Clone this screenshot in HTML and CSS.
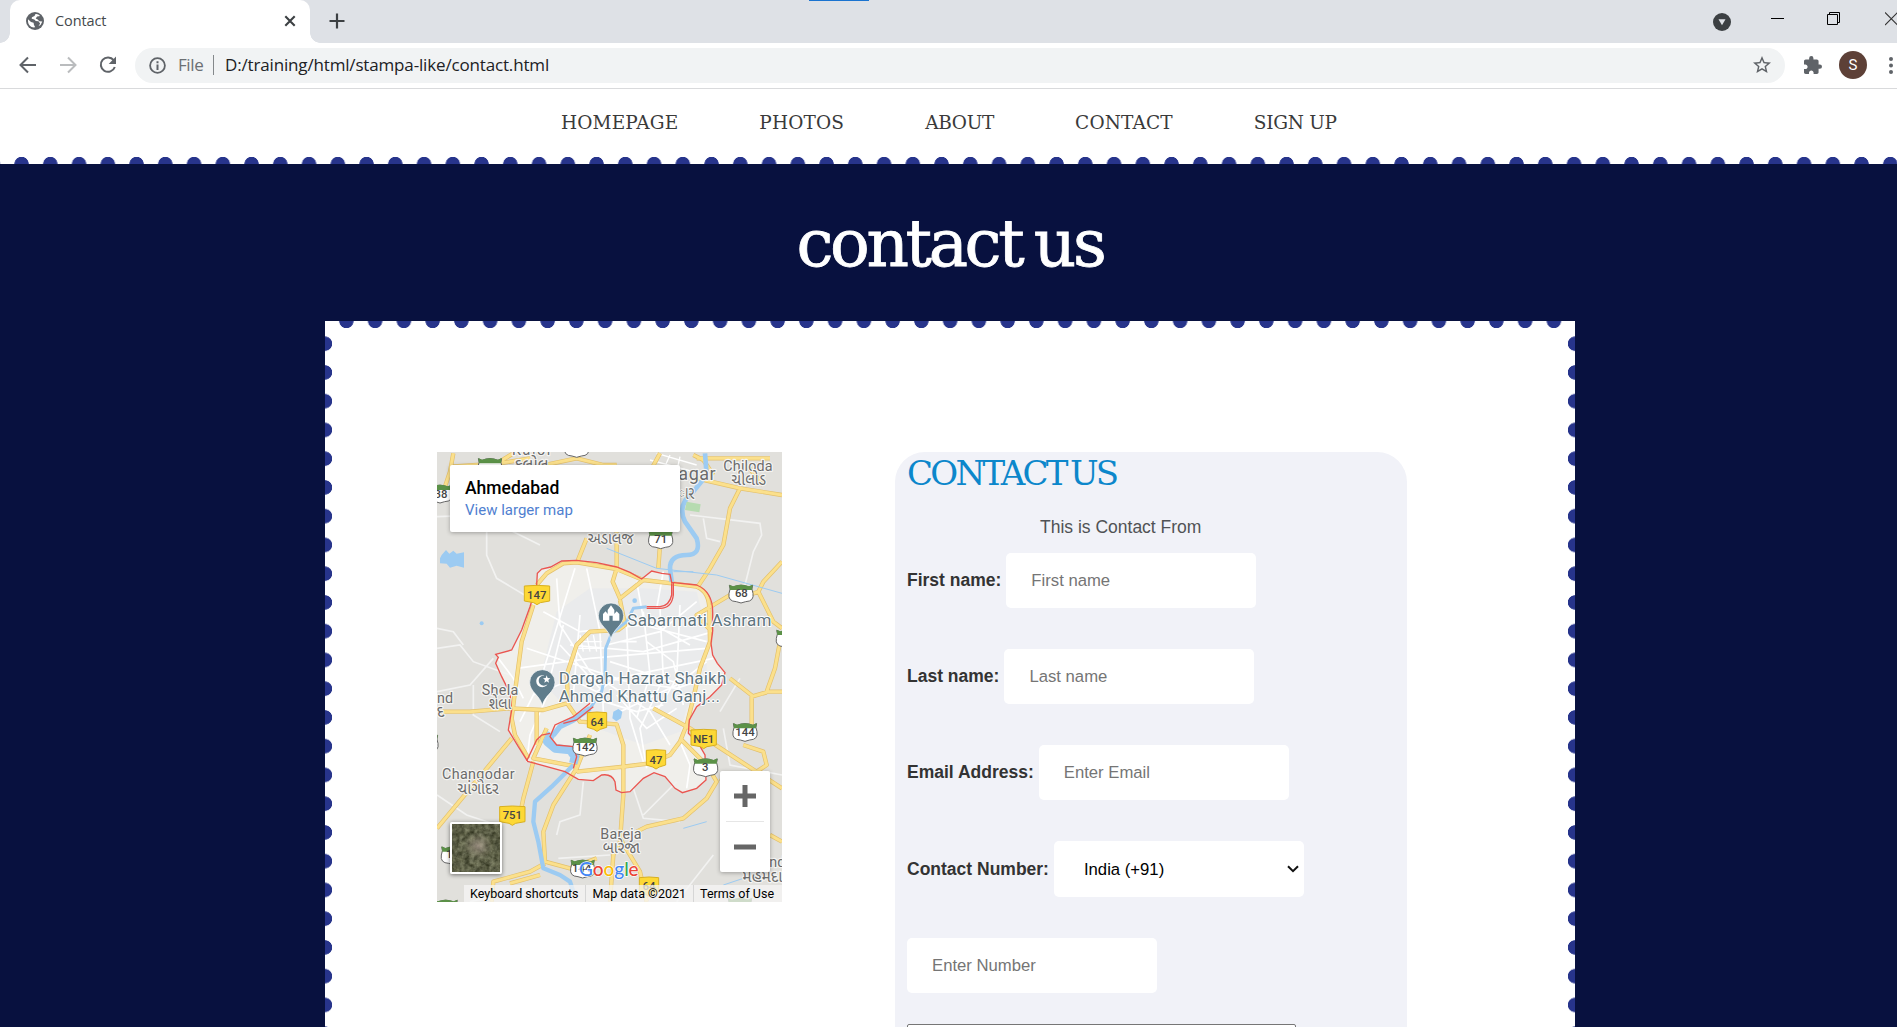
FILE: index.html
```html
<!DOCTYPE html>
<html lang="en">
<head>
<meta charset="utf-8">
<title>Contact</title>
<link rel="stylesheet" href="styles.css">
</head>
<body>
<div class="browser">
  <div class="tabstrip">
    <div class="load-line"></div>
    <div class="tab">
      <svg class="favicon" width="18" height="18" viewBox="0 0 18 18"><circle cx="9" cy="9" r="9" fill="#5f6368"/><path d="M2 7.2 5 10l2.6.7.3 2 1.3 2.6C5 16 2 13 2 9zM9.5 2l-1 2-2.6 1.2-.2 1.6 2.6.6 1.5 1.5 2.7.3 1.6 2.4-1.6 2.6 2.2-1.5 1.6-3.2-3-.3-1.6-1.8-2-.8 1.4-2 3-.5C13 2.300 11 1.700 9.500 2z" fill="#fff"/></svg>
      <span class="tab-title">Contact</span>
      <svg class="tab-close" width="12" height="12" viewBox="0 0 12 12"><path d="M1.300 1.300 10.700 10.700M10.700 1.300 1.300 10.700" stroke="#3c4043" stroke-width="2.100"/></svg>
    </div>
    <svg class="new-tab" width="16" height="16" viewBox="0 0 16 16"><path d="M8 .5v15M.5 8h15" stroke="#3c4043" stroke-width="2.200"/></svg>
    <div class="window-controls">
      <svg width="18" height="18" viewBox="0 0 18 18"><circle cx="9" cy="9" r="9" fill="#3c4043"/><path d="M5.500 6.300h7L9 12.300z" fill="#dee1e6"/></svg>
      <svg width="14" height="14" viewBox="0 0 14 14"><path d="M0 4.500h13" stroke="#000"/></svg>
      <svg width="14" height="14" viewBox="0 0 14 14"><path d="M.5 2.500h10v10H.5zM2.500 2.500v-2h10v10h-2" fill="none" stroke="#000"/></svg>
      <svg width="12" height="14" viewBox="0 0 12 14"><path d="M0 .5 12.500 13M12.500 .5 0 13" stroke="#333" stroke-width="1.100"/></svg>
    </div>
  </div>
  <div class="toolbar">
    <svg width="18" height="18" viewBox="0 0 18 18"><path d="M17 9H2M9 1.500 1.500 9 9 16.500" fill="none" stroke="#5f6368" stroke-width="2"/></svg>
    <svg width="18" height="18" viewBox="0 0 18 18"><path d="M1 9h15M9 1.500 16.500 9 9 16.500" fill="none" stroke="#babcbe" stroke-width="2"/></svg>
    <svg width="18" height="18" viewBox="0 0 18 18"><path d="M14.700 4.200A7.200 7.200 0 1 0 15.800 11" fill="none" stroke="#5f6368" stroke-width="2"/><path d="M17 .5V8h-7.300z" fill="#5f6368"/></svg>
    <div class="omnibox">
      <svg width="17" height="17" viewBox="0 0 17 17"><circle cx="8.500" cy="8.500" r="7.400" fill="none" stroke="#5f6368" stroke-width="1.800"/><path d="M8.500 7.500V13M8.500 4.200v2" stroke="#5f6368" stroke-width="2"/></svg>
      <span class="scheme">File</span>
      <span class="divider"></span>
      <span class="url">D:/training/html/stampa-like/contact.html</span>
      <svg class="star" width="18" height="18" viewBox="2 2 20 20"><path d="M22 9.240l-7.190-.62L12 2 9.190 8.630 2 9.240l5.460 4.730L5.820 21 12 17.270 18.180 21l-1.630-7.030L22 9.240zM12 15.400l-3.760 2.270 1-4.280-3.320-2.880 4.380-.38L12 6.100l1.710 4.040 4.380.38-3.320 2.880 1 4.280L12 15.400z" fill="#5f6368"/></svg>
    </div>
    <svg class="puzzle" width="18" height="18" viewBox="2 1 21 21"><path d="M20.500 11H19V7c0-1.100-.9-2-2-2h-4V3.500a2.500 2.500 0 0 0-5 0V5H4c-1.100 0-1.990.9-1.990 2v3.800H3.500c1.490 0 2.700 1.210 2.700 2.700s-1.210 2.700-2.700 2.700H2V20c0 1.100.9 2 2 2h3.800v-1.500c0-1.490 1.210-2.700 2.700-2.700s2.700 1.210 2.700 2.700V22H17c1.100 0 2-.9 2-2v-4h1.500a2.500 2.500 0 0 0 0-5z" fill="#5f6368"/></svg>
    <span class="avatar">S</span>
    <svg class="kebab" width="4" height="17" viewBox="0 0 4 17"><g fill="#5f6368"><circle cx="2" cy="2" r="2"/><circle cx="2" cy="8.500" r="2"/><circle cx="2" cy="15" r="2"/></g></svg>
  </div>
</div>

<header class="site-header">
  <nav class="menu">
    <a>HOMEPAGE</a><a>PHOTOS</a><a class="tight">ABOUT</a><a>CONTACT</a><a class="tight">SIGN UP</a>
  </nav>
</header>

<main class="page">
  <h1 class="page-title"><span>contact us</span></h1>
  <section class="stamp">
    <div class="map">
      <svg class="map-canvas" width="345" height="450" viewBox="21 21 1035 1350" preserveAspectRatio="none">
        <defs>
          <g id="us"><path d="M-35-24-24-19Q0-30 24-19L35-24Q30-14 36 0 40 24 14 25L0 29-14 25Q-40 24-36 0-30-14-35-24z" fill="#fff" stroke="#666" stroke-width="3"/><path d="M-35-26-24-21Q0-30 24-21L35-26 33-10H-33z" fill="#5b9147"/></g>
          <path id="in" d="M-29-27Q0-31 29-27V17L10 23 0 29-10 23-29 17z" fill="#fdd835" stroke="#d8b021" stroke-width="3" stroke-linejoin="round"/>
          <path id="inw" d="M-38-27Q0-31 38-27V18L10 23 0 29-10 23-38 18z" fill="#fdd835" stroke="#d8b021" stroke-width="3" stroke-linejoin="round"/>
          <path id="pin" d="M0 108C-4 76-38 66-38 36A38 38 0 1 1 38 36C38 66 4 76 0 108z" fill="#607d8b" stroke="#fff" stroke-width="2"/>
          <path id="city" d="M320 420 322 385 335 372 362 366 395 348 440 346 500 353 560 366 600 382 635 402 665 378 695 385 720 388 725 412 800 420 Q848 440 848 500V560L843 595 848 630 862 655 885 683 875 720 840 755 800 785 778 825 775 865 805 895 825 930 828 1005 800 1030 757 1043 735 1030 705 995 672 983 640 1000 600 1040 575 1043 558 1035 555 1010 Q545 985 515 990L490 1007 445 1003 405 980 293 949 265 905 235 855 245 795 240 745 215 695 197 655 205 637 197 628 245 615 275 555 300 485z"/>
        </defs>
        <rect x="21" y="21" width="1035" height="1350" fill="#e1e0dc"/>
        <use href="#city" fill="#f0efeb"/>
        <path d="M380 500 480 430 640 430 800 440 830 560 830 680 770 790 750 860 640 900 500 850 400 780 330 700z" fill="#eaebec"/>
        <g fill="none" stroke="#f2f2f1" stroke-width="5">
          <path d="M21 215 160 210 250 260 330 300M170 210V330L200 400 300 460M21 610 90 600 130 650 240 690M100 600 70 560 21 550M21 740 120 720 190 640M130 720V810L210 860M780 210 990 235 995 270 970 320 945 420M820 220 830 280 870 290M21 1050 110 1110 200 1140M380 1170 390 1130 450 1110 460 1010M385 1240 540 1230M610 1030 640 1120 750 1130M640 1110 740 1010M850 1230 740 1370M120 1370 300 1330M880 850 900 960 1056 990M930 700 870 800"/>
        </g>
        <g fill="none" stroke="#fff" stroke-width="5">
          <path d="M435 370 330 710 270 830M700 380 680 490M380 400 390 540 480 680 660 800 720 900M470 370 510 560 520 800M290 610 560 700 850 640M260 670 480 640 830 610M340 500 450 560 640 540 830 590M310 750 460 690 740 730 830 700M400 540 350 740M450 510 430 750M590 540 600 820 640 950M640 500 660 690 620 820M690 490 700 700 630 850 650 970M750 480 740 700 680 800M420 600 640 620 850 560M540 650 760 720M530 600 690 560 800 470M570 800 740 720 830 650M560 750 650 850 740 790M390 600 510 730M490 760 620 800 700 780M620 410 640 520 780 600M750 890 780 960 770 1030M290 950 300 870 370 710M205 640 250 700 280 760M560 700 500 740 440 710M620 590 570 590M650 590 730 650 760 780"/>
          <path d="M450 570 460 620M470 570 480 620M490 570 500 620M445 590H515M445 610H515M690 30 670 70M720 30 700 75M750 35 740 80M660 45 790 80M680 25 800 60" stroke-width="4"/>
        </g>
        <g fill="none" stroke-linejoin="round">
          <g stroke="#e3c06c" stroke-width="13"><path id="r1" d="M310 480 275 590 255 740 245 820 255 870 295 940M320 420 350 385 400 355 440 352 560 372 640 405 725 415 800 425Q840 440 838 500L840 590 810 670 790 760 770 840 750 890 720 930 660 955 580 965 440 980M440 355 470 280M560 370V260M685 370 690 300M640 405 570 460 548 410 560 370M570 465 585 540 565 555 480 560 440 600 410 690 415 780 450 830 560 838 580 900 580 1050 570 1190 550 1230 540 1370M21 800H120L240 790 340 795 410 775M320 800V900M245 880 21 1150M350 850 310 940 440 965M310 950 280 1060 270 1110M480 870 440 970 370 1080 340 1160 345 1250 420 1270 500 1240M345 1255 300 1280 190 1310 185 1370M240 1315 330 1290M570 1180 630 1280 650 1370M670 790 780 850 1056 1030M750 880 830 960 860 1010 830 1060 760 1120 650 1145 620 1160M870 1000 960 1050M845 560 800 510 850 480 900 450M930 130 900 190 880 300 840 370 800 430M1056 350 1000 410 985 440 1030 530 1056 550M985 440 930 460M800 100 930 130 1056 150M950 60 1000 120M560 60H520L440 40 250 80M60 65 210 55 300 40M250 25 160 80M70 25 60 80 40 140M790 30 820 45 850 90M660 80 690 25M800 40 1020 40M1050 590 1035 670 1010 740H1056M1010 742 965 755 965 840M900 700 970 755M940 900 1000 920 1010 960 980 980M1056 1190 1020 1170"/></g>
          <use href="#r1" stroke="#fbe08c" stroke-width="9"/>
        </g>
        <g fill="none" stroke="#9ccbf2" stroke-linejoin="round">
          <path d="M825 25 830 90 790 140Q740 180 765 230L800 280Q815 330 770 330 720 330 720 370L725 410" stroke-width="14"/>
          <path d="M650 485 610 490 590 530 545 565 527 610 525 690 515 740 480 790" stroke-width="9"/>
          <path d="M480 790 430 825 390 845 370 870" stroke-width="16"/><path d="M365 865 352 890 375 910 420 915 435 935 430 955" stroke-width="26"/>
          <path d="M430 960 365 1025 315 1070 310 1130 325 1190 340 1270 390 1290 420 1310 430 1340" stroke-width="13"/>
          <path d="M530 310 680 370 860 390 1056 445M760 1150 830 1130M730 380 790 380M880 1320 940 1300" stroke-width="3"/>
        </g>
        <path d="M30 340 35 330 48 315 58 326 70 317 80 326 102 322V368L80 362 60 368 50 356 30 355zM550 800l15-8 12 8-4 20-14 9-12-9z" fill="#9ccbf2"/><path d="M770 170 812 178 808 202 765 195z" fill="#b6dbb0"/><circle cx="155" cy="535" r="6" fill="#9ccbf2"/><circle cx="614" cy="467" r="7" fill="#9ccbf2"/>
        <use href="#city" fill="none" stroke="#ea5550" stroke-width="4"/>
        <path d="M730 412V450Q725 490 690 490H650M725 415V450Q718 483 690 485H650M480 775 430 815 375 840 360 875 380 900 430 905 440 935 430 970M490 785 440 825 400 835M290 948 320 885 335 870 360 865" fill="none" stroke="#ea5550" stroke-width="4"/>
        <g><use href="#us" x="180" y="65"/><use href="#us" x="440" y="8"/><use href="#us" x="30" y="145"/><use href="#us" x="692" y="282"/><use href="#us" x="933" y="445"/><use href="#us" x="465" y="904"/><use href="#us" x="945" y="860"/><use href="#us" x="827" y="966"/><use href="#us" x="1075" y="580"/><use href="#us" x="70" y="1230"/><use href="#us" x="458" y="1270"/><use href="#us" x="47" y="1390"/><use href="#us" x="-12" y="895"/><use href="#us" x="930" y="1385"/></g>
        <g><use href="#inw" x="321" y="450"/><use href="#in" x="501" y="830"/><use href="#in" x="678" y="943"/><use href="#inw" x="821" y="882"/><use href="#inw" x="247" y="1112"/><use href="#in" x="657" y="1325"/></g>
        <g class="shield-text">
          <text x="692" y="293">71</text><text x="934" y="457">68</text><text x="33" y="160">38</text><text x="466" y="917">142</text><text x="945" y="872">144</text><text x="826" y="979">3</text><text x="320" y="461">147</text><text x="501" y="842">64</text><text x="678" y="956">47</text><text x="821" y="894">NE1</text><text x="247" y="1123">751</text><text x="657" y="1334">64</text><text x="455" y="1282">144</text><text x="58" y="1240">1</text>
        </g>
        <use href="#pin" x="543" y="476"/><path d="M519 527V507L527 499 533 507V495L543 481 553 495V507L560 499 568 507V527H548V512H538V527z" fill="#fff"/>
        <use href="#pin" x="337" y="676"/><path d="M343 692A18 18 0 1 0 353 716 15 15 0 1 1 343 692z" fill="#fff"/><path d="M350 691 353 699 361 700 355 705 357 713 350 709 343 713 345 705 339 700 347 699z" fill="#fff"/>
        <g class="poi"><text x="592" y="543" textLength="432">Sabarmati Ashram</text><text x="386" y="717" textLength="503">Dargah Hazrat Shaikh</text><text x="386" y="770" textLength="484">Ahmed Khattu Ganj...</text></g>
        <g class="place"><text x="246" y="31" textLength="115">Kalol</text><text x="880" y="78" textLength="148">Chiloda</text><text x="155" y="749" textLength="110">Shela</text><text x="36" y="1002" textLength="218">Changodar</text><text x="511" y="1181" textLength="124">Bareja</text><text x="21" y="774">nd</text><text x="1018" y="1266">nd</text></g>
        <g class="place native"><text x="252" y="74" textLength="104" lengthAdjust="spacingAndGlyphs">કલોલ</text><text x="904" y="119" textLength="104" lengthAdjust="spacingAndGlyphs">ચીલોડ</text><text x="473" y="298" textLength="138" lengthAdjust="spacingAndGlyphs">અડાલજ</text><text x="176" y="791" textLength="68" lengthAdjust="spacingAndGlyphs">શેલા</text><text x="82" y="1047" textLength="124" lengthAdjust="spacingAndGlyphs">ચાંગોદર</text><text x="518" y="1223" textLength="112" lengthAdjust="spacingAndGlyphs">બારેજા</text><text x="20" y="815">દ</text><text x="937" y="1310" textLength="120" lengthAdjust="spacingAndGlyphs">મહેમદા</text></g>
        <g class="place big"><text x="745" y="105" textLength="112">agar</text><text x="745" y="163" textLength="48" lengthAdjust="spacingAndGlyphs">ાર</text></g>
        <g class="google"><text x="447" y="1292" font-size="57" textLength="179"><tspan fill="#4285f4">G</tspan><tspan fill="#ea4335">o</tspan><tspan fill="#fbbc05">o</tspan><tspan fill="#4285f4">g</tspan><tspan fill="#34a853">l</tspan><tspan fill="#ea4335">e</tspan></text></g>
      </svg>
      <div class="place-card"><strong>Ahmedabad</strong><a>View larger map</a></div>
      <svg class="satellite" width="52" height="52" viewBox="0 0 52 52">
        <filter id="terrain" x="0" y="0" width="100%" height="100%" color-interpolation-filters="sRGB"><feTurbulence type="fractalNoise" baseFrequency=".2" numOctaves="3" seed="4"/><feColorMatrix values=".4 .2 0 0 .06  .4 .2 0 0 .07  .35 .2 0 0 0  0 0 0 0 1"/></filter>
        <radialGradient id="town"><stop offset="0" stop-color="#c4b0a8" stop-opacity=".6"/><stop offset="1" stop-color="#a59b8b" stop-opacity="0"/></radialGradient>
        <rect width="52" height="52" fill="#fff"/><rect x="2" y="2" width="48" height="48" filter="url(#terrain)"/><ellipse cx="28" cy="24" rx="15" ry="14" fill="url(#town)"/>
      </svg>
      <div class="zoom"><svg width="50" height="101" viewBox="0 0 50 101"><path d="M14 25h22M25 14v22M14 76h22" stroke="#666" stroke-width="5"/><path d="M6 50.500h38" stroke="#e6e6e6"/></svg></div>
      <div class="credits"><span>Keyboard shortcuts</span><span>Map data ©2021</span><span>Terms of Use</span></div>
    </div>
    <form class="contact-form">
      <h2 class="form-title"><span>CONTACT US</span></h2>
      <p class="form-note">This is Contact From</p>
      <div class="field"><label>First name:</label><input placeholder="First name"></div>
      <div class="field"><label>Last name:</label><input placeholder="Last name"></div>
      <div class="field"><label>Email Address:</label><input placeholder="Enter Email"></div>
      <div class="field field-select"><label>Contact Number:</label><select><option>India (+91)</option></select>
        <svg class="chevron" width="12" height="8" viewBox="0 0 12 8"><path d="M1 1.200 6 6.200 11 1.200" fill="none" stroke="#111" stroke-width="2"/></svg></div>
      <div class="field"><input placeholder="Enter Number"></div>
      <textarea class="message"></textarea>
    </form>
  </section>
</main>
</body>
</html>
```
FILE: styles.css
```css
* { box-sizing: border-box; }
body { margin: 0; width: 1897px; height: 1027px; overflow: hidden; display: flex; flex-direction: column; background: #fff; font-family: "Liberation Sans", Arial, sans-serif; color: #333; }
svg { display: block; flex: none; }

.browser { flex: none; height: 89px; border-bottom: 1px solid #d9dadc; font-family: "Open Sans", "Noto Sans", sans-serif; }
.tabstrip { position: relative; display: flex; height: 43px; padding-left: 10px; background: #dee1e6; }
.load-line { position: absolute; left: 809px; top: 0; width: 60px; height: 1px; background: #1a73d0; }
.tab { position: relative; display: flex; align-items: center; width: 300px; height: 43px; padding: 0 14px 1px 16px; border-radius: 10px 10px 0 0; background: #fff; }
.tab::before, .tab::after { content: ""; position: absolute; bottom: 0; width: 10px; height: 10px; }
.tab::before { left: -10px; background: radial-gradient(circle at 0 0, transparent 9.5px, #fff 10px); }
.tab::after { right: -10px; background: radial-gradient(circle at 100% 0, transparent 9.5px, #fff 10px); }
.tab-title { margin: -2px 0 0 11px; font-size: 14.5px; letter-spacing: -.1px; color: #45494d; }
.tab-close { margin-left: auto; }
.new-tab { margin: 13px 0 0 19px; }
.window-controls { display: flex; gap: 40px; margin-left: auto; padding-top: 13px; align-items: flex-start; }
.window-controls svg:nth-child(2) { margin: 1px 2px 0 0; }
.window-controls svg:nth-child(3) { margin: -1px 4px 0 0; }
.window-controls svg:nth-child(4) { margin-top: -1px; }

.toolbar { display: flex; align-items: center; height: 44px; padding-left: 19px; gap: 22px; }
.toolbar > svg:nth-child(3) { margin-right: -4px; }
.omnibox { display: flex; align-items: center; width: 1650px; height: 35px; padding: 0 14px; border-radius: 18px; background: #f1f3f4; font-size: 17px; }
.scheme { margin: -2px 0 0 12px; width: 25px; color: #6b6f73; letter-spacing: -.4px; }
.divider { width: 1px; height: 20px; margin: 0 11px 0 10px; background: #84888b; }
.url { margin-top: -2px; color: #202124; letter-spacing: -.16px; }
.star { margin-left: auto; }
.puzzle { margin-left: -3px; }
.avatar { width: 28px; height: 28px; margin-left: -5px; border-radius: 50%; background: #5d4037; color: #fff; font: 15px/28px Roboto, sans-serif; text-align: center; flex: none; }

.site-header { flex: none; height: 75px; background: radial-gradient(circle at 50% 100%, #27348b 6.800px, transparent 7.500px) 7.200px 100% / 28.750px 8px repeat-x #fff; }
.menu { display: flex; gap: 81px; padding: 21px 0 0 561px; font: 18.500px/26px "DejaVu Serif", serif; color: #3a3a3a; }
.menu a { white-space: nowrap; letter-spacing: .15px; }
.menu .tight { letter-spacing: -.3px; }

.page { flex: 1; min-height: 0; overflow: hidden; background: #08113f; }
.page-title { height: 157px; margin: 0; padding: 35px 0 0 3px; text-align: center; font: 66px/90px "DejaVu Serif", serif; color: #fff; }
.page-title span { display: inline-block; letter-spacing: -3.400px; word-spacing: -5px; -webkit-text-stroke: .8px #fff; }

.stamp { display: flex; align-items: flex-start; gap: 113px; width: 1250px; height: 800px; margin: 0 0 0 325px; padding: 131px 0 0 112px;
  background:
    linear-gradient(#fff, #fff) 0 0 / 8px 4px no-repeat,
    linear-gradient(#fff, #fff) 100% 0 / 8px 4px no-repeat,
    radial-gradient(circle at 50% 0, #27348b 6.800px, transparent 7.500px) 7px 0 / 28.750px 8px repeat-x,
    radial-gradient(circle at 0 50%, #27348b 6.800px, transparent 7.500px) 0 8.300px / 8px 28.750px repeat-y,
    radial-gradient(circle at 100% 50%, #27348b 6.800px, transparent 7.500px) 100% 8.300px / 8px 28.750px repeat-y,
    #fff; }

.map { position: relative; flex: none; width: 345px; height: 450px; overflow: hidden; font-family: Roboto, sans-serif; }
.map text { font-family: Roboto, "Noto Sans Gujarati", "Noto Sans", sans-serif; paint-order: stroke; stroke-linejoin: round; }
.map .shield-text text { font-size: 34px; font-weight: 500; text-anchor: middle; fill: #444; }
.map .poi text { font-size: 51px; fill: #607580; stroke: #fff; stroke-width: 6px; }
.map .place text { font-size: 43px; fill: #6b6b6b; stroke: #f5f5f3; stroke-width: 7px; }
.map .native text { font-size: 48px; }
.map .big text { font-size: 54px; }
.map .google text { font-family: Lato, sans-serif; font-weight: 500; stroke: #fff; stroke-width: 4px; }
.place-card { position: absolute; left: 13px; top: 13px; display: flex; flex-direction: column; width: 230px; height: 67px; padding: 12px 15px; background: #fff; border-radius: 2px; box-shadow: 0 1px 4px rgba(0,0,0,.3); }
.place-card strong { font-size: 17.500px; line-height: 22px; font-weight: 500; color: #000; }
.place-card a { font-size: 15px; line-height: 22px; color: #5080d0; }
.satellite { position: absolute; left: 13px; top: 370px; border-radius: 2px; box-shadow: 0 1px 4px rgba(0,0,0,.5); }
.zoom { position: absolute; left: 283px; top: 319px; width: 50px; height: 101px; background: #fff; border-radius: 2px; box-shadow: 0 1px 4px rgba(0,0,0,.3); }
.credits { position: absolute; right: 0; bottom: 0; display: flex; width: 318px; height: 17px; font-size: 12.500px; line-height: 17px; color: #000; background: rgba(245,245,245,.75); }
.credits span { padding: 0 7px 0 6px; border-left: 1px solid #d6d6d6; white-space: nowrap; }
.credits span:first-child { border: 0; }

.contact-form { width: 512px; height: 700px; padding: 0 12px; border-radius: 30px 30px 0 0; background: #f1f2f8; font-size: 17.500px; }
.form-title { height: 55px; margin: 0; font: 34px/43px "DejaVu Serif", serif; color: #0c87cb; white-space: nowrap; }
.form-title span { letter-spacing: -2.700px; word-spacing: -4px; }
.form-note { height: 46px; margin: 0; padding: 9px 0 0 133px; line-height: 22px; color: #505255; }
.field { position: relative; display: flex; align-items: center; gap: 5px; height: 55px; margin-bottom: 41px; }
.field label { font-weight: 700; white-space: nowrap; }
.field input, .field select { flex: none; width: 250px; height: 55px; padding: 0 25px; border: 0; border-radius: 5px; background-color: #fff; font: 16.700px "Liberation Sans", Arial, sans-serif; }
.field-select { height: 56px; }
.field select { height: 56px; padding-left: 30px; color: #000; appearance: none; }
.chevron { margin-left: -22px; pointer-events: none; }
.field input::placeholder { color: #757575; opacity: 1; }
.message { display: block; width: 389px; height: 120px; margin-top: -10px; border: 1px solid #767676; border-radius: 2px; background: #fff; }
```
